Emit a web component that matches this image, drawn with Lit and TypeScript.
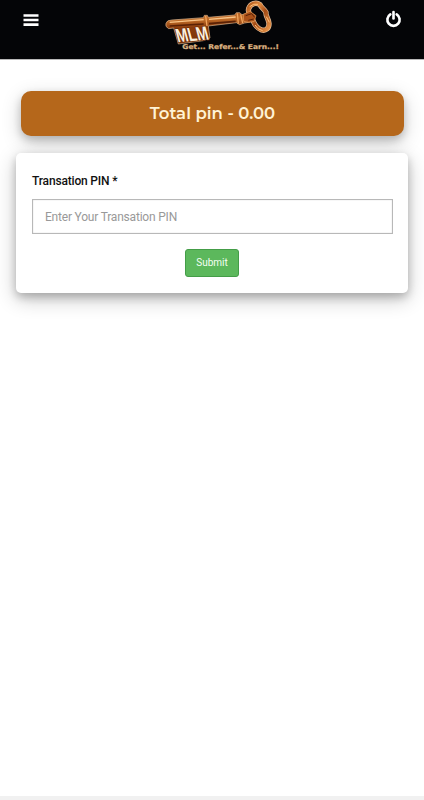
import { LitElement, html, css } from "lit";
import { customElement } from "lit/decorators.js";

@customElement("key-logo")
class KeyLogo extends LitElement {
  static styles = css`
    :host { display: block; width: 135px; height: 59px; }
    svg { display: block; }
    .mlm { font: 700 58px "Liberation Sans", Arial, sans-serif; fill: #fbeedb; stroke: #6b2a0b; stroke-width: 4px; paint-order: stroke; }
    .tag { font: 700 20px "DejaVu Sans", sans-serif; fill: #e6c49a; stroke: #b98c5a; stroke-width: 1px; }
  `;
  render() {
    return html`<svg width="135" height="59" viewBox="0 0 405 177">
      <defs>
        <linearGradient id="shaft" x1="0" y1="0" x2="0.1" y2="1">
          <stop offset="0" stop-color="#a9541b" />
          <stop offset=".25" stop-color="#c4702a" />
          <stop offset=".5" stop-color="#8a3b0c" />
          <stop offset="1" stop-color="#7a3309" />
        </linearGradient>
        <linearGradient id="bow" x1="0" y1="0" x2="1" y2="1">
          <stop offset="0" stop-color="#b35a1c" />
          <stop offset=".3" stop-color="#e08a40" />
          <stop offset=".55" stop-color="#a34c16" />
          <stop offset="1" stop-color="#e8954a" />
        </linearGradient>
      </defs>
      <path d="M33 70Q36 60 50 60L145 53L148 46L157 46L160 52L239 45L244 38L254 38L261 44L278 40L287 66L269 69L254 74L244 68L160 78L165 114L145 122L70 132L56 84L41 86Q29 80 33 70Z"
        fill="url(#shaft)" stroke="#d8b591" stroke-width="2" />
      <path d="M44 67L146 59M162 58L242 51" fill="none" stroke="#f8c488" stroke-width="4" />
      <path d="M44 78L146 72M162 71L242 64" fill="none" stroke="#5a2105" stroke-width="5" />
      <path d="M152 48L156 78M247 40L250 71M257 43L263 69" fill="none" stroke="#f0a45d" stroke-width="4" />
      <path d="M281 26C286 10 304 6 315 14C318 23 329 28 333 37C331 48 341 55 342 70C343 86 332 93 320 90C307 85 299 74 294 62C286 49 277 42 281 26Z"
        fill="none" stroke="#e0bd9a" stroke-width="16" stroke-linejoin="round" />
      <path d="M281 26C286 10 304 6 315 14C318 23 329 28 333 37C331 48 341 55 342 70C343 86 332 93 320 90C307 85 299 74 294 62C286 49 277 42 281 26Z"
        fill="none" stroke="url(#bow)" stroke-width="12" stroke-linejoin="round" />
      <path d="M265 43L285 34L303 47L298 64L280 67L266 64Z" fill="#a95119" stroke="#e39b57" stroke-width="2" />
      <path d="M272 47L290 41L299 52M280 61L296 57" fill="none" stroke="#582005" stroke-width="3" />
      <path d="M284 20Q296 9 309 13M300 75Q307 89 323 92M334 50L343 67" fill="none" stroke="#ffc27c" stroke-width="3" />
      <text class="mlm" transform="translate(68 127) rotate(-5) skewX(10)" textLength="97" lengthAdjust="spacingAndGlyphs">MLM</text>
      <text class="tag" x="82" y="147" textLength="290" lengthAdjust="spacingAndGlyphs">Get... Refer...&amp; Earn...!</text>
    </svg>`;
  }
}

@customElement("app-root")
class AppRoot extends LitElement {
  static styles = css`
    :host { display: flex; flex-direction: column; height: 800px; background: #fff; font-family: Roboto, sans-serif; box-sizing: border-box; border-bottom: 4px solid #f1f1f1; }
    * { box-sizing: border-box; }
    header { flex: none; height: 59px; background: #040507; display: grid; grid-template-columns: 155px 135px 1fr; box-shadow: 0 1px 0 #b9b9b9; }
    .menu { width: 16px; height: 14px; margin: 13px 0 0 23px; }
    .power { width: 17px; height: 18px; margin: 10px 22px 0 0; justify-self: end; }
    main { padding: 32px 16px 0; }
    .total { height: 45px; margin: 0 4px 17px 5px; border-radius: 10px; background: #b5671b; color: #fff3d6; display: flex; align-items: center; justify-content: center; font: 600 16.5px Montserrat, Inter, sans-serif; padding-bottom: 1px; box-shadow: 0 4px 8px rgba(0,0,0,.2), 0 6px 20px rgba(0,0,0,.19); }
    .card { position: relative; height: 140px; padding: 21px 15px 0 16px; background: #fff; border-radius: 5px; box-shadow: 0 4px 8px rgba(0,0,0,.2), 0 6px 20px rgba(0,0,0,.24); display: flex; flex-direction: column; }
    label { font-size: 12px; font-weight: 500; line-height: 14px; letter-spacing: -.17px; color: #111; }
    input { width: 100%; height: 35px; margin: 11px 0 15px; padding: 0 12px; border: 1px solid #b8b8b8; border-radius: 0; font: 12px Roboto, sans-serif; letter-spacing: -.2px; box-shadow: inset 0 0 1px #aaa; }
    input::placeholder { color: #999; opacity: 1; }
    button { align-self: center; width: 54px; height: 28px; margin-right: 1px; padding: 0 0 1px; border: 1px solid #449d48; border-radius: 3px; background: #5cb85c; color: #f4fff4; font: 10px Roboto, sans-serif; }
  `;
  render() {
    return html`
      <header>
        <svg class="menu" viewBox="0 0 16 14"><path d="M.5 2.5h15M.5 7h15M.5 11.7h15" stroke="#fff" stroke-width="2.7" /></svg>
        <key-logo></key-logo>
        <svg class="power" viewBox="0 0 16 17"><path d="M5 4.2A5.8 5.8 0 1 0 11 4.2" fill="none" stroke="#fff" stroke-width="2.5" stroke-linecap="round" /><path d="M8 2V8" stroke="#fff" stroke-width="2.5" stroke-linecap="round" /></svg>
      </header>
      <main>
        <div class="total">Total pin - 0.00</div>
        <div class="card">
          <label for="pin">Transation PIN *</label>
          <input id="pin" type="text" placeholder="Enter Your Transation PIN" />
          <button type="button">Submit</button>
        </div>
      </main>
    `;
  }
}
